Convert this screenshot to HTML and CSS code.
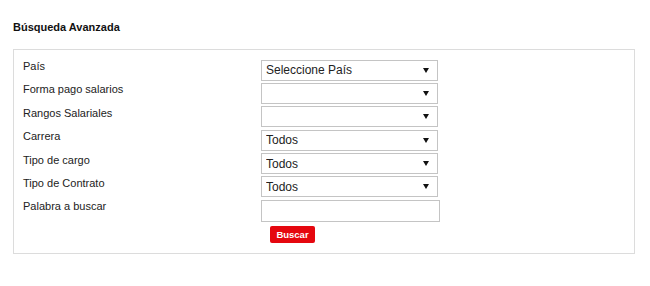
FILE: index.html
```html
<!DOCTYPE html>
<html lang="es">
<head>
    <meta charset="UTF-8">
    <meta name="viewport" content="width=device-width, initial-scale=1.0">
    <title>Búsqueda Avanzada</title>
    <link rel="stylesheet" href="styles.css">
</head>
<body>

    <!-- Busqueda avanzada -->
    <div class="page">
        <h3 class="title">Búsqueda Avanzada</h3>

        <div class="search-box">
            <form class="search-form" onsubmit="return false;">
                <label>País</label>
                <div class="select-wrap">
                    <select><option>Seleccione País</option></select>
                </div>

                <label>Forma pago salarios</label>
                <div class="select-wrap">
                    <select><option></option></select>
                </div>

                <label>Rangos Salariales</label>
                <div class="select-wrap">
                    <select><option></option></select>
                </div>

                <label>Carrera</label>
                <div class="select-wrap">
                    <select><option>Todos</option></select>
                </div>

                <label>Tipo de cargo</label>
                <div class="select-wrap">
                    <select><option>Todos</option></select>
                </div>

                <label>Tipo de Contrato</label>
                <div class="select-wrap">
                    <select><option>Todos</option></select>
                </div>

                <label>Palabra a buscar</label>
                <input type="text" class="text-input">

                <span></span>
                <div class="actions">
                    <button type="submit" class="btn-search">Buscar</button>
                </div>
            </form>
        </div>
    </div>

</body>
</html>
```

FILE: styles.css
```css
/* General Reset */
* {
    margin: 0;
    padding: 0;
    box-sizing: border-box;
}

body {
    font-family: 'Liberation Sans', Arial, sans-serif;
    background-color: #fff;
    color: #222;
}

.page {
    padding: 0 16px 0 13px;
}

/* Title */
.title {
    font-size: 11px;
    font-weight: bold;
    line-height: 13px;
    color: #111;
    padding-top: 21px;
    margin-bottom: 15px;
}

/* Box */
.search-box {
    width: 622px;
    border: 1px solid #dcdcdc;
    padding: 9.5px 9px 10px 9px;
}

.search-form {
    display: grid;
    grid-template-columns: 238px 179px;
    row-gap: 2.4px;
    align-items: start;
}

.search-form label {
    font-size: 11px;
    line-height: 13px;
    color: #222;
    padding-top: 0.5px;
}

/* Selects */
.select-wrap {
    position: relative;
    width: 177px;
}

.select-wrap select {
    -webkit-appearance: none;
    appearance: none;
    display: block;
    width: 177px;
    height: 21px;
    border: 1px solid #c4c4c4;
    border-radius: 0;
    background-color: #fff;
    font-family: 'Liberation Sans', Arial, sans-serif;
    font-size: 12px;
    color: #222;
    padding: 0 16px 0 4px;
    outline: none;
}

.select-wrap::after {
    content: "";
    position: absolute;
    right: 9px;
    top: 8px;
    border-left: 3px solid transparent;
    border-right: 3px solid transparent;
    border-top: 5px solid #111;
}

/* Text input */
.text-input {
    display: block;
    width: 179px;
    height: 22px;
    border: 1px solid #c4c4c4;
    background-color: #fff;
    outline: none;
}

/* Button */
.actions {
    padding: 1.6px 0 0 9px;
}

.btn-search {
    display: block;
    width: 45px;
    height: 17px;
    background-color: #e5070f;
    color: #fff;
    border: none;
    border-radius: 2px;
    font-family: 'Liberation Sans', Arial, sans-serif;
    font-size: 9.5px;
    font-weight: bold;
    cursor: pointer;
}
```
